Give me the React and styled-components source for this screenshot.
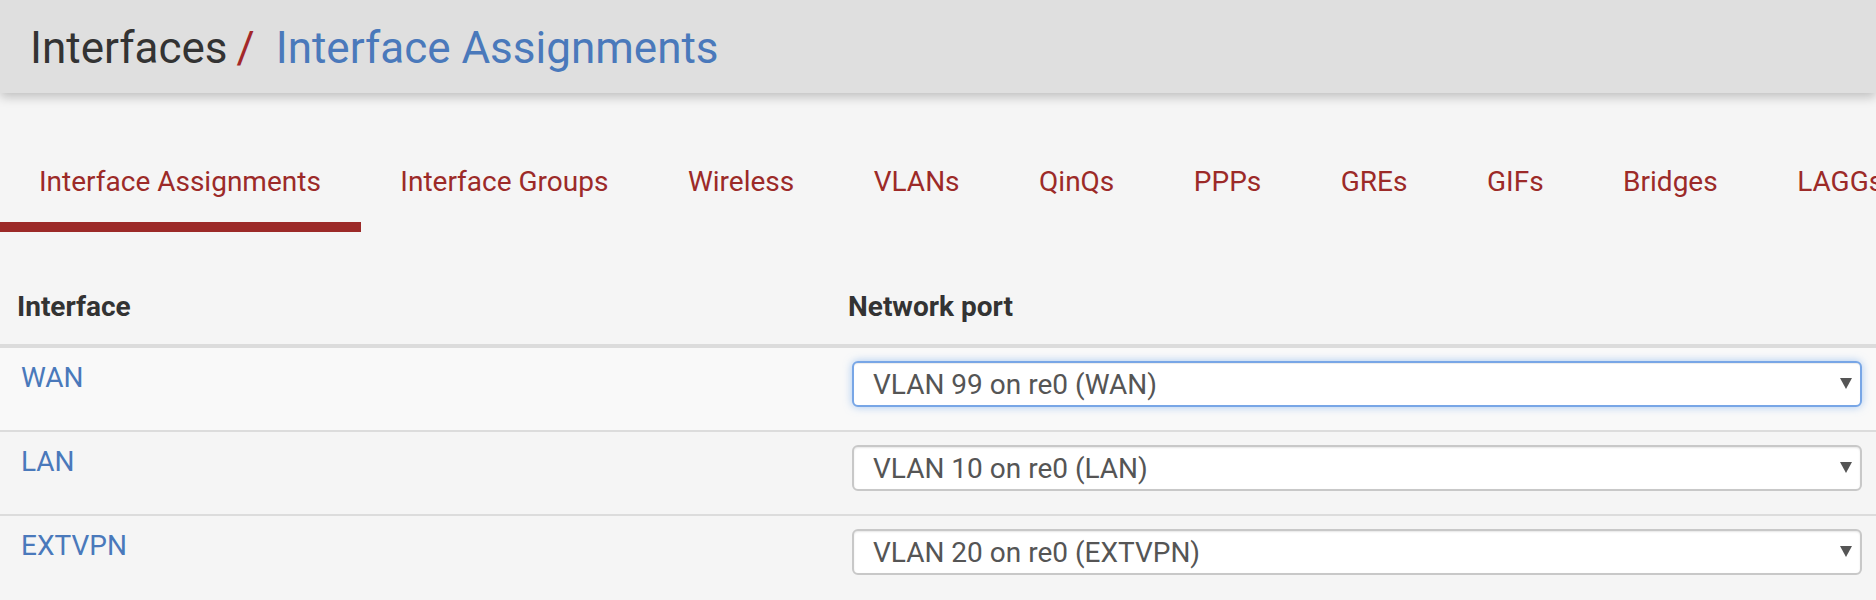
import styled, { createGlobalStyle } from "styled-components"

const GlobalStyle = createGlobalStyle`
html, body {
  margin: 0;
  padding: 0;
  background: #f5f5f5;
  overflow: hidden;
}
body {
  font-family: Roboto, "Liberation Sans", sans-serif;
  color: #333;
}
`;

const Page = styled.div`
width: 1876px;
height: 600px;
overflow: hidden;
background: #f5f5f5;
`;

const Header = styled.header`
height: 93px;
box-sizing: border-box;
padding: 24px 0 0 30px;
background: #dfdfdf;
box-shadow: 0 4px 10px rgba(0, 0, 0, 0.22);
position: relative;
z-index: 1;
`;

const Breadcrumb = styled.h1`
margin: 0;
font-size: 44px;
font-weight: 400;
line-height: 48px;
color: #333;
white-space: nowrap;
`;

const Slash = styled.span`
color: #a3282a;
margin: 0 21px 0 9px;
`;

const Current = styled.span`
color: #4a79bb;
`;

const TabBar = styled.nav`
display: flex;
margin-top: 49px;
white-space: nowrap;
overflow: hidden;
`;

const Tab = styled.a`
flex: none;
padding: 20px 40px 20px 39px;
font-size: 28px;
line-height: 40px;
color: #9c2a28;
text-decoration: none;
border-bottom: 10px solid ${(p) => (p.$active ? "#9c2a28" : "transparent")};

& + & {
  padding-left: 39.5px;
}
`;

const Table = styled.table`
width: 1883px;
margin-top: 38px;
border-collapse: collapse;
table-layout: fixed;
`;

const HeadCell = styled.th`
width: ${(p) => p.$width || "auto"};
padding: 17px;
text-align: left;
font-size: 28px;
font-weight: 700;
line-height: 40px;
color: #333;
border-bottom: 4px solid #dcdcdc;
`;

const Row = styled.tr`
background: ${(p) => (p.$striped ? "#f9f9f9" : "#f5f5f5")};
`;

const Cell = styled.td`
vertical-align: top;
padding: 10px 21px 23px;
border-top: 2px solid #dcdcdc;
`;

const IfaceLink = styled.a`
display: block;
font-size: 28px;
line-height: 40px;
color: #4a79bb;
text-decoration: none;
`;

const SelectWrap = styled.div`
position: relative;
margin-top: 3px;
`;

const Select = styled.select`
appearance: none;
-webkit-appearance: none;
display: block;
width: 100%;
height: 46px;
box-sizing: border-box;
padding: 0 40px 0 19px;
font-family: Roboto, "Liberation Sans", sans-serif;
font-size: 28px;
color: #555;
background: #fff;
border: 2px solid ${(p) => (p.$focused ? "#78a6e6" : "#c8c8c8")};
border-radius: 6px;
box-shadow: ${(p) =>
  p.$focused
    ? "inset 0 1px 1px rgba(0,0,0,.075), 0 0 8px rgba(102,160,233,.55)"
    : "inset 0 1px 2px rgba(0,0,0,.1)"};
outline: none;
`;

const Arrow = styled.svg`
position: absolute;
right: 10px;
top: 17px;
width: 12px;
height: 11px;
pointer-events: none;
`;

const rows = [
  { name: "WAN", port: "VLAN 99 on re0 (WAN)", focused: true },
  { name: "LAN", port: "VLAN 10 on re0 (LAN)" },
  { name: "EXTVPN", port: "VLAN 20 on re0 (EXTVPN)" },
];

const tabs = [
  "Interface Assignments",
  "Interface Groups",
  "Wireless",
  "VLANs",
  "QinQs",
  "PPPs",
  "GREs",
  "GIFs",
  "Bridges",
  "LAGGs",
];

const App = () => {
  return (
    <Page>
      <GlobalStyle />
      <Header>
        <Breadcrumb>
          Interfaces<Slash>/</Slash>
          <Current>Interface Assignments</Current>
        </Breadcrumb>
      </Header>

      <TabBar>
        {tabs.map((t, i) => (
          <Tab key={t} $active={i === 0}>
            {t}
          </Tab>
        ))}
      </TabBar>

      <Table>
        <thead>
          <tr>
            <HeadCell $width="797px">Interface</HeadCell>
            <HeadCell>Network port</HeadCell>
          </tr>
        </thead>
        <tbody>
          {rows.map((r, i) => (
            <Row key={r.name} $striped={i === 0}>
              <Cell>
                <IfaceLink>{r.name}</IfaceLink>
              </Cell>
              <Cell>
                <SelectWrap>
                  <Select $focused={r.focused} defaultValue={r.port}>
                    <option>{r.port}</option>
                  </Select>
                  <Arrow viewBox="0 0 12 11">
                    <polygon points="0,0 12,0 6,11" fill="#555" />
                  </Arrow>
                </SelectWrap>
              </Cell>
            </Row>
          ))}
        </tbody>
      </Table>
    </Page>
  )
}

export default App
